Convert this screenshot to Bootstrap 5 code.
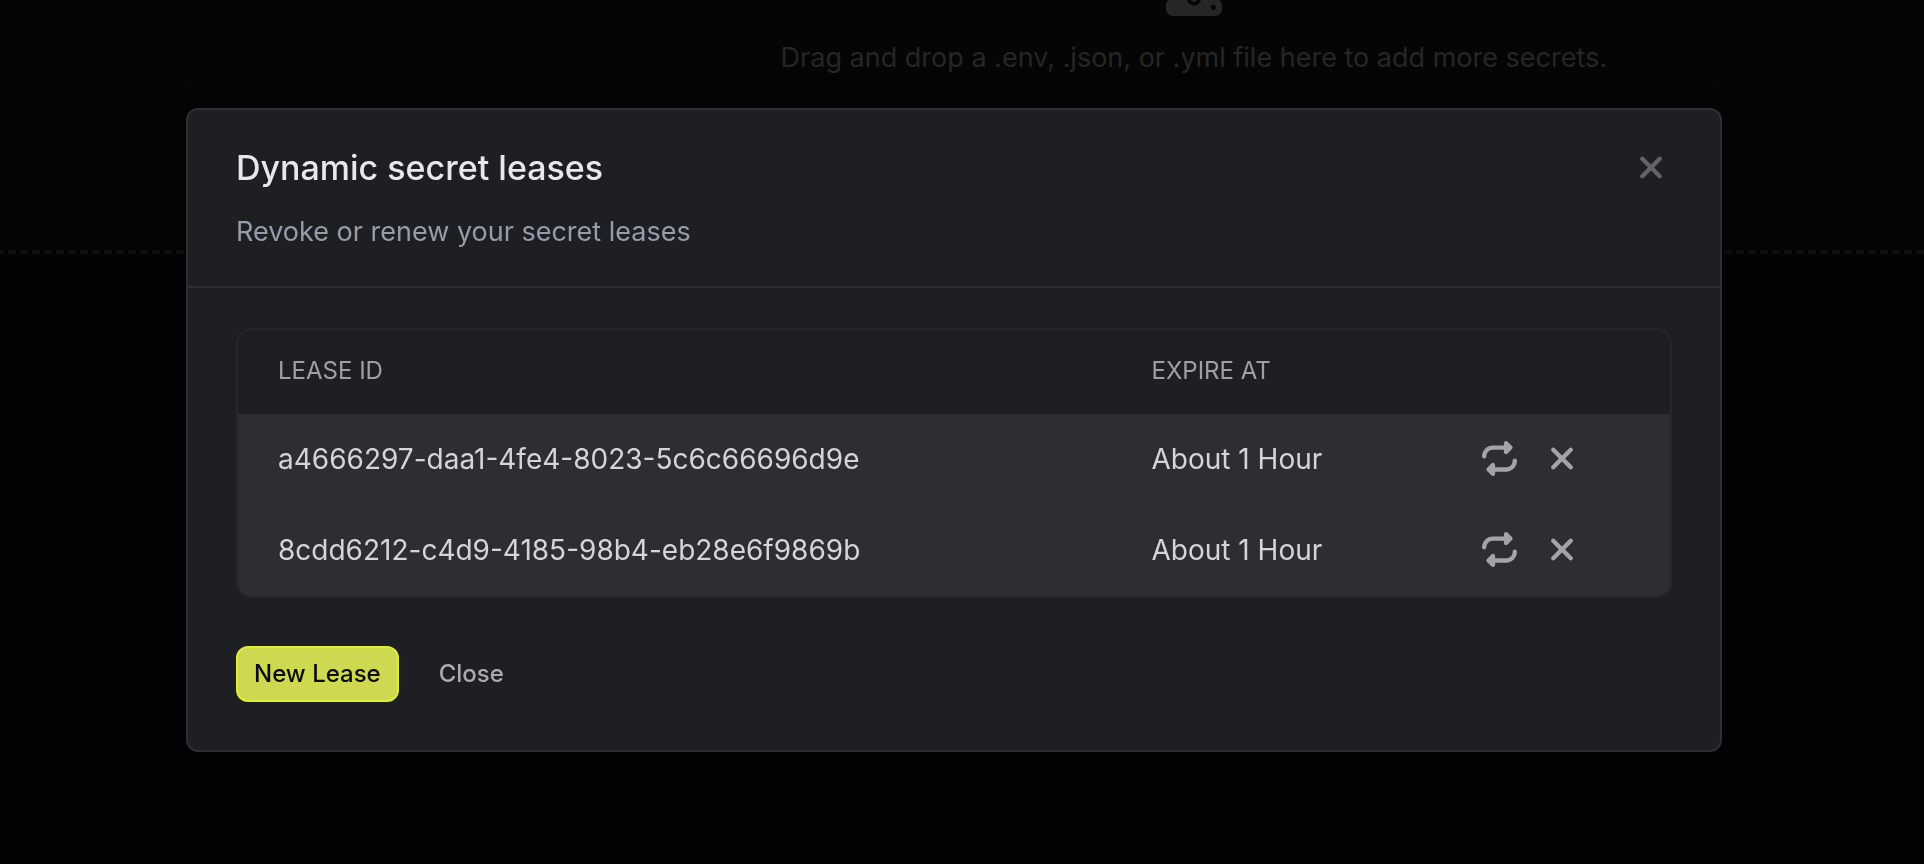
<!DOCTYPE html>
<html lang="en">
<head>
<meta charset="utf-8">
<meta name="viewport" content="width=device-width, initial-scale=1">
<title>Dynamic secret leases</title>
<link href="https://cdn.jsdelivr.net/npm/bootstrap@5.3.0/dist/css/bootstrap.min.css" rel="stylesheet">
<style>
  body { background: #020305; color: #d4d5d8; font-family: Inter, sans-serif; font-size: 28px; line-height: 40px; }
  /* Drop area behind the dialog */
  .drop-zone { background: #050505; color: #262626; font-size: 27px; padding: 0 0 172px 24.1%; }
  .drop-icon { width: 56px; height: 56px; margin-top: -40px; margin-bottom: 22px; }
  .drop-edge { height: 4px; background: repeating-linear-gradient(90deg, #0f0f10 0 4px, #040405 4px 8px, #0f0f10 8px 12px); }
  .lease-modal { padding: 0 16px 4px 0; }
  .lease-modal .modal-dialog { max-width: 1536px; min-height: 100%; margin: 0 auto; }
  .lease-modal .modal-content { background: #1e1f22; color: inherit; border: 2px solid #2d2f33; border-radius: 12px; box-shadow: 0 24px 48px -12px #0008; }
  .lease-modal .modal-header { padding: 38px 48px 34px; border-bottom: 2px solid #2d2f33; border-radius: 0; }
  .lease-modal .modal-title { font-size: 34px; line-height: 40px; font-weight: 500; color: #e8e8ea; }
  .lease-modal .modal-body { padding: 40px 48px 48px; }
  .sub-title { font-size: 27px; color: #959cab; margin-top: 24px; }
  .plain-btn { padding: 0; border: 0; line-height: 1; color: #a3a4a6; }
  .plain-btn:hover { color: #fff; }
  .plain-btn svg { display: block; height: 35px; }
  .dismiss-btn { color: #626367; margin-top: 2px; }
  .lease-frame { border: 2px solid #26272b; border-radius: 16px; overflow: hidden; margin-bottom: 48px; }
  .lease-table { --bs-table-bg: transparent; --bs-table-color: inherit; color: inherit; margin: 0; table-layout: fixed; }
  .lease-table > :not(caption) > * > * { padding: 0 40px 2px; border: 0; height: 91px; vertical-align: middle; }
  .lease-table > thead > tr > th { height: 84px; font-size: 24px; font-weight: 400; color: #a0a0a2; }
  .lease-table > tbody, .lease-table > thead { border: 0; }
  .lease-table > tbody { background: #2d2e32; }
  .id-col { width: 61%; }
  .expire-col { width: 23.1%; }
  .foot-row { gap: 22px; }
  .foot-btn { font-size: 24px; line-height: 32px; font-weight: 500; border: 2px solid transparent; padding: 10px 16px; border-radius: 12px; color: #aaabad; }
  .foot-btn:hover { color: #fff; }
  .new-btn, .new-btn:hover { background: #ced951; border-color: #e0ed34; color: #0b0c08; }
</style>
</head>
<body class="overflow-hidden">
<svg class="d-none" aria-hidden="true">
  <symbol id="xmark" viewBox="0 0 384 512"><path fill="currentColor" d="M342.6 150.6c12.5-12.5 12.5-32.8 0-45.3s-32.8-12.5-45.3 0L192 210.7 86.6 105.4c-12.5-12.5-32.8-12.5-45.3 0s-12.5 32.8 0 45.3L146.7 256 41.4 361.4c-12.5 12.5-12.5 32.8 0 45.3s32.8 12.5 45.3 0L192 301.3 297.4 406.6c12.5 12.5 32.8 12.5 45.3 0s12.5-32.8 0-45.3L237.3 256 342.6 150.6z"/></symbol>
  <symbol id="repeat" viewBox="0 0 512 512"><path fill="currentColor" d="M0 224c0 17.7 14.3 32 32 32s32-14.3 32-32c0-53 43-96 96-96H320v32c0 12.9 7.8 24.6 19.8 29.6s25.7 2.2 34.9-6.9l64-64c12.5-12.5 12.5-32.8 0-45.3l-64-64c-9.2-9.2-22.9-11.9-34.9-6.9S320 19.1 320 32V64H160C71.6 64 0 135.6 0 224zm512 64c0-17.7-14.3-32-32-32s-32 14.3-32 32c0 53-43 96-96 96H192V352c0-12.9-7.8-24.6-19.8-29.6s-25.7-2.2-34.9 6.9l-64 64c-12.5 12.5-12.5 32.8 0 45.3l64 64c9.2 9.2 22.9 11.9 34.9 6.9s19.8-16.6 19.8-29.6V448H352c88.4 0 160-71.6 160-160z"/></symbol>
</svg>

<main>
  <section class="drop-zone d-flex flex-column align-items-center">
    <svg class="drop-icon" viewBox="0 0 512 512" aria-hidden="true"><path fill="currentColor" d="M288 109.3V352c0 17.7-14.3 32-32 32s-32-14.3-32-32V109.3l-73.4 73.4c-12.5 12.5-32.8 12.5-45.3 0s-12.5-32.8 0-45.3l128-128c12.5-12.5 32.8-12.5 45.3 0l128 128c12.5 12.5 12.5 32.8 0 45.3s-32.8 12.5-45.3 0L288 109.3zM64 352H192c0 35.3 28.7 64 64 64s64-28.7 64-64H448c35.3 0 64 28.7 64 64v32c0 35.3-28.7 64-64 64H64c-35.3 0-64-28.7-64-64V416c0-35.3 28.7-64 64-64zM432 456a24 24 0 1 0 0-48 24 24 0 1 0 0 48z"/></svg>
    <p class="m-0">Drag and drop a .env, .json, or .yml file here to add more secrets.</p>
  </section>
  <div class="drop-edge"></div>
</main>

<div class="modal d-block lease-modal" tabindex="-1" role="dialog" aria-modal="true" aria-labelledby="leaseTitle">
  <div class="modal-dialog modal-dialog-centered">
    <div class="modal-content">
      <div class="modal-header align-items-start">
        <div>
          <h1 class="modal-title" id="leaseTitle">Dynamic secret leases</h1>
          <p class="sub-title mb-0">Revoke or renew your secret leases</p>
        </div>
        <button type="button" class="btn plain-btn dismiss-btn" aria-label="Close dialog"><svg width="42"><use href="#xmark"/></svg></button>
      </div>
      <div class="modal-body">
        <div class="lease-frame">
          <table class="table lease-table">
            <thead>
              <tr><th class="id-col" scope="col">LEASE ID</th><th class="expire-col" scope="col">EXPIRE AT</th><th aria-label="Actions"></th></tr>
            </thead>
            <tbody>
              <tr>
                <td>a4666297-daa1-4fe4-8023-5c6c66696d9e</td>
                <td>About 1 Hour</td>
                <td><div class="d-flex align-items-center gap-4">
                  <button type="button" class="btn plain-btn" aria-label="Renew"><svg width="35"><use href="#repeat"/></svg></button>
                  <button type="button" class="btn plain-btn" aria-label="Revoke"><svg width="42"><use href="#xmark"/></svg></button>
                </div></td>
              </tr>
              <tr>
                <td>8cdd6212-c4d9-4185-98b4-eb28e6f9869b</td>
                <td>About 1 Hour</td>
                <td><div class="d-flex align-items-center gap-4">
                  <button type="button" class="btn plain-btn" aria-label="Renew"><svg width="35"><use href="#repeat"/></svg></button>
                  <button type="button" class="btn plain-btn" aria-label="Revoke"><svg width="42"><use href="#xmark"/></svg></button>
                </div></td>
              </tr>
            </tbody>
          </table>
        </div>
        <div class="d-flex foot-row">
          <button type="button" class="btn foot-btn new-btn">New Lease</button>
          <button type="button" class="btn foot-btn">Close</button>
        </div>
      </div>
    </div>
  </div>
</div>
<script src="https://cdn.jsdelivr.net/npm/bootstrap@5.3.0/dist/js/bootstrap.bundle.min.js"></script>
</body>
</html>
